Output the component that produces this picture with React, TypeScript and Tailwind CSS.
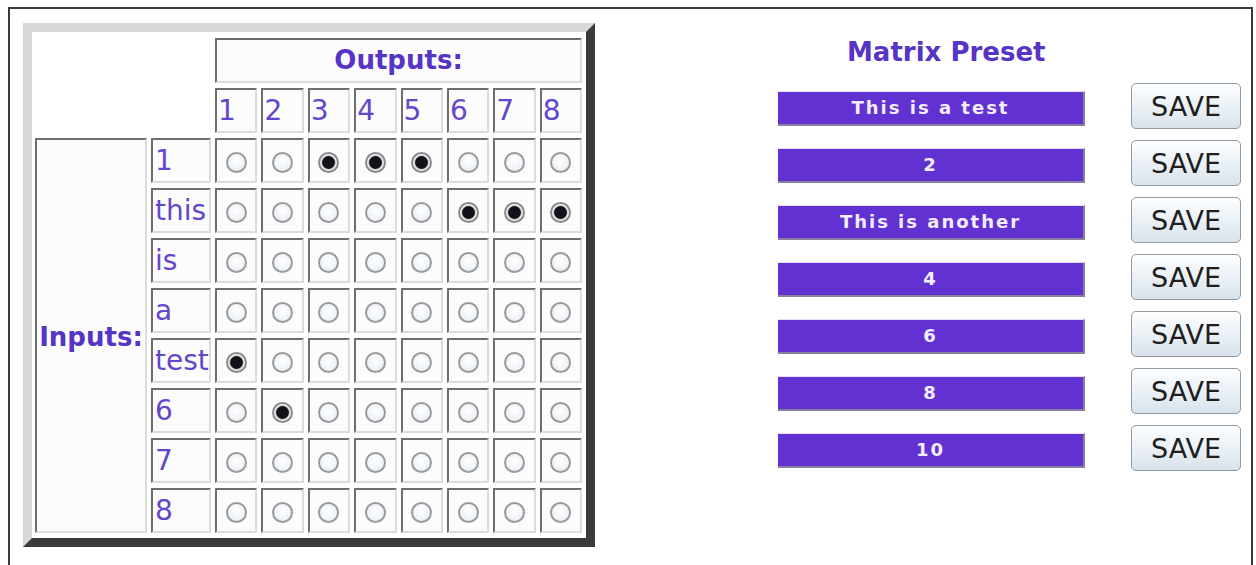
import React from "react";

const outputs = [1, 2, 3, 4, 5, 6, 7, 8];

const inputs: { label: string; on: number[] }[] = [
  { label: "1", on: [3, 4, 5] },
  { label: "this", on: [6, 7, 8] },
  { label: "is", on: [] },
  { label: "a", on: [] },
  { label: "test", on: [1] },
  { label: "6", on: [2] },
  { label: "7", on: [] },
  { label: "8", on: [] },
];

const presets = ["This is a test", "2", "This is another", "4", "6", "8", "10"];

const cell =
  "border-2 border-t-[#6e6e6e] border-l-[#6e6e6e] border-r-[#dcdcdc] border-b-[#dcdcdc] bg-[#fcfcfc]";

function Radio({ checked }: { checked: boolean }) {
  return (
    <span
      className={
        "flex h-[21px] w-[21px] items-center justify-center rounded-full border-2 bg-[radial-gradient(circle_at_50%_40%,#ffffff,#e4ebf3)] " +
        (checked ? "border-[#8a8a8a]" : "border-[#9a9a9a]")
      }
    >
      {checked && (
        <span className="h-[13px] w-[13px] rounded-full bg-[#12121a] ring-1 ring-[#d0d0d0]" />
      )}
    </span>
  );
}

export default function App() {
  return (
    <div className="h-[565px] w-[1256px] overflow-hidden bg-white font-['DejaVu_Sans',sans-serif]">
      <div className="ml-[8px] mt-[7px] flex h-[570px] w-[1245px] border-2 border-b-0 border-[#3a3a3a]">
        {/* matrix panel */}
        <div className="ml-[13px] mt-[14px] h-[524px] w-[572px] border-[9px] border-t-[#d8d8d8] border-l-[#d8d8d8] border-r-[#3b3b3b] border-b-[#3b3b3b] bg-white">
          <div className="grid grid-cols-[112px_60px_repeat(8,42.4px)] grid-rows-[repeat(10,45px)] gap-x-[4px] gap-y-[5px] pl-[3px] pt-[6px] text-[#6246cc]">
            <div className="col-span-2" />
            <div
              className={`${cell} col-span-8 flex items-center justify-center text-[26px] font-bold text-[#5634c6]`}
            >
              Outputs:
            </div>

            <div className="col-span-2" />
            {outputs.map((n) => (
              <div key={n} className={`${cell} flex items-center pl-[1px] text-[28px] leading-none`}>
                {n}
              </div>
            ))}

            {inputs.map((row, r) => (
              <React.Fragment key={row.label}>
                {r === 0 && (
                  <div
                    className={`${cell} row-span-8 flex items-center justify-center pt-[4px] text-[26px] font-bold text-[#5634c6]`}
                  >
                    Inputs:
                  </div>
                )}
                <div className={`${cell} flex items-center pl-[2px] text-[28px] leading-none`}>
                  {row.label}
                </div>
                {outputs.map((n) => (
                  <div key={n} className={`${cell} flex items-center justify-center pt-[4px]`}>
                    <Radio checked={row.on.includes(n)} />
                  </div>
                ))}
              </React.Fragment>
            ))}
          </div>
        </div>

        {/* presets */}
        <div className="ml-[183px] flex flex-col">
          <h2 className="ml-[69px] mt-[30px] text-[26px] font-bold leading-none text-[#5634c6]">
            Matrix Preset
          </h2>
          <div className="mt-[18px] flex flex-col gap-[11px]">
            {presets.map((p, i) => (
              <div key={i} className="flex h-[46px] items-center">
                <div className="mt-[4px] flex h-[35px] w-[307px] items-center justify-center border-b-2 border-r-2 border-t border-b-[#8b7fa0] border-r-[#8b7fa0] border-t-[#e9defd] bg-[#6231d1] text-[18px] font-bold tracking-[2px] text-[#f3eeff]">
                  {p}
                </div>
                <button className="ml-[46px] h-[46px] w-[110px] rounded-[5px] border border-[#8f9aa5] bg-gradient-to-b from-[#fdfeff] to-[#d9e3eb] text-[27px] leading-none text-[#1e1e1e]">
                  SAVE
                </button>
              </div>
            ))}
          </div>
        </div>
      </div>
    </div>
  );
}
